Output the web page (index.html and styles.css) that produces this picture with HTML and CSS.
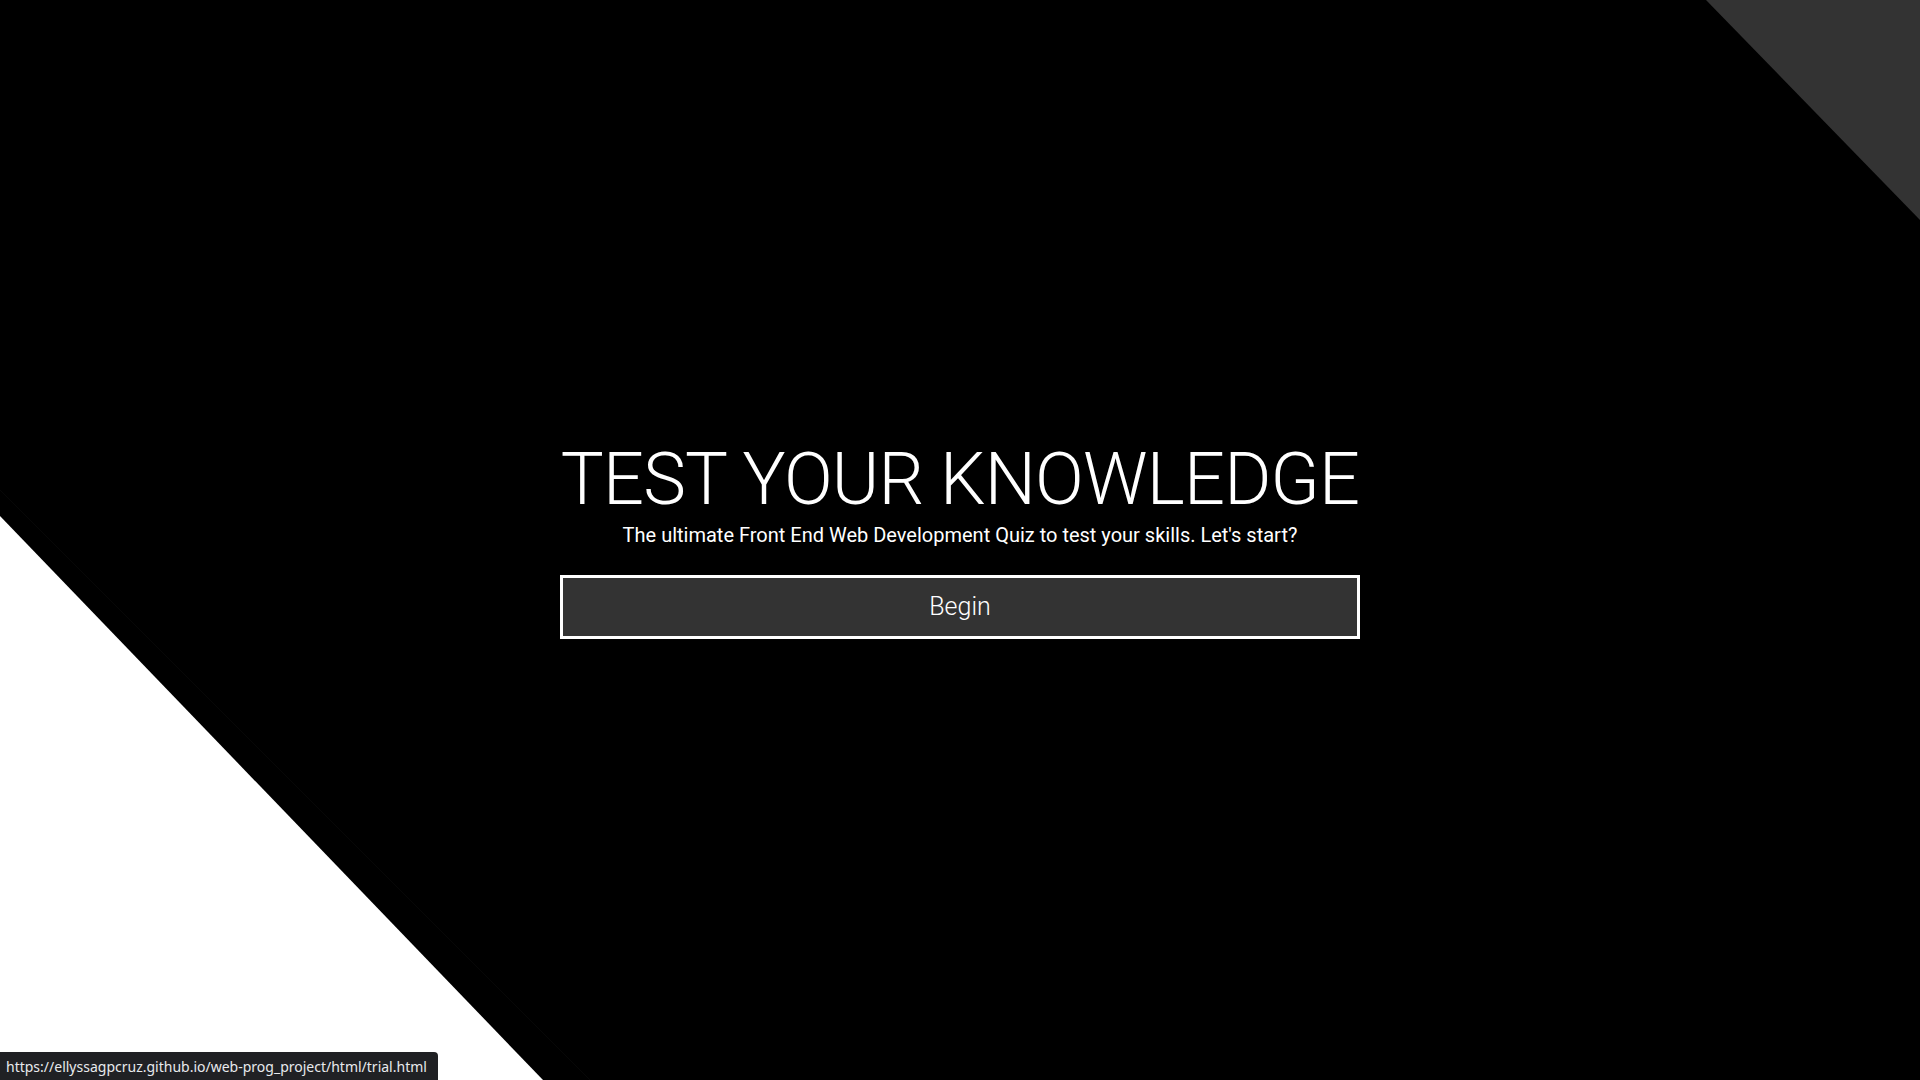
FILE: index.html
```html
<!DOCTYPE html>
<html lang="en">
<head>
<meta charset="utf-8">
<title>Test Your Knowledge</title>
<link rel="stylesheet" href="styles.css">
</head>
<body>
<div class="page">
  <svg class="deco" width="1920" height="1080" viewBox="0 0 1920 1080" aria-hidden="true">
    <line x1="0" y1="490" x2="590" y2="1080" stroke="#070707" stroke-width="1"/>
    <polygon points="0,516 543,1080 0,1080" fill="#ffffff"/>
    <polygon points="1706,0 1920,0 1920,220" fill="#333333"/>
  </svg>
  <main class="hero">
    <h1 class="title">TEST YOUR KNOWLEDGE</h1>
    <p class="subtitle">The ultimate Front End Web Development Quiz to test your skills. Let's start?</p>
    <a class="begin" href="#">Begin</a>
  </main>
  <div class="status">https://ellyssagpcruz.github.io/web-prog_project/html/trial.html</div>
</div>
</body>
</html>
```

FILE: styles.css
```css
* { box-sizing: border-box; }
html, body {
  margin: 0;
  padding: 0;
  background: #000;
  overflow: hidden;
}
.page {
  position: relative;
  width: 1920px;
  height: 1080px;
  display: flex;
  align-items: center;
  justify-content: center;
}
.deco {
  position: absolute;
  left: 0;
  top: 0;
}
.hero {
  position: relative;
  display: flex;
  flex-direction: column;
  align-items: center;
  width: 800px;
  margin-top: 0px;
}
.title {
  margin: 0;
  font-family: "Roboto", "Liberation Sans", sans-serif;
  font-weight: 300;
  font-size: 72px;
  line-height: 76px;
  letter-spacing: -0.8px;
  color: #fff;
  white-space: nowrap;
}
.subtitle {
  margin: 5px 0 0;
  font-family: "Roboto", "Liberation Sans", sans-serif;
  font-size: 20px;
  line-height: 24px;
  color: #fff;
}
.begin {
  margin-top: 28px;
  display: flex;
  align-items: center;
  justify-content: center;
  width: 800px;
  height: 64px;
  border: 3px solid #fff;
  background: #333;
  color: #fff;
  text-decoration: none;
  font-family: "Roboto", "Liberation Sans", sans-serif;
  font-weight: 300;
  font-size: 25px;
}
.status {
  position: absolute;
  left: 0;
  bottom: 0;
  width: 438px;
  height: 28px;
  padding: 6px 0 0 6px;
  background: #202124;
  border-top-right-radius: 4px;
  color: #e8eaed;
  font-family: "Noto Sans", "Open Sans", sans-serif;
  font-size: 14px;
  line-height: 18px;
  white-space: nowrap;
}
```
